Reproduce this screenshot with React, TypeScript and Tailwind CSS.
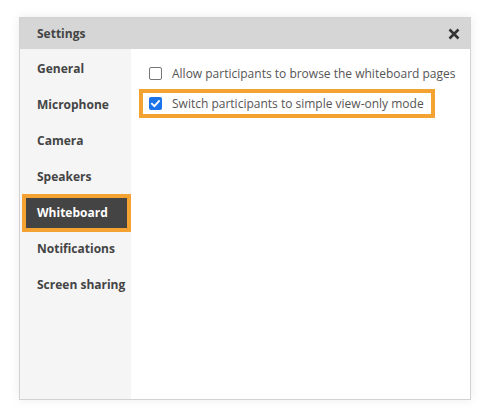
import React from "react";

const items = ["General", "Microphone", "Camera", "Speakers", "Whiteboard", "Notifications", "Screen sharing"];

function Box({ checked }: { checked: boolean }) {
  if (checked) {
    return (
      <span className="flex h-[13px] w-[13px] shrink-0 items-center justify-center rounded-[2px] bg-[#1a73e8]">
        <svg width="11" height="11" viewBox="0 0 11 11">
          <path d="M2 5.8 L4.4 8.2 L9 3" fill="none" stroke="white" strokeWidth="1.9" strokeLinecap="square" />
        </svg>
      </span>
    );
  }
  return <span className="h-[13px] w-[13px] shrink-0 rounded-[2px] border border-[#767676] bg-white" />;
}

export default function App() {
  return (
    <div className="h-[417px] w-[491px] bg-white pl-[19px] pt-[17px]" style={{ fontFamily: "'Open Sans', sans-serif" }}>
      <div className="flex h-[383px] w-[452px] flex-col border border-[#d2d2d2] shadow-[0_0_10px_rgba(0,0,0,0.08)]">
        <div className="flex h-[31px] shrink-0 items-center justify-between bg-[#d6d6d6] pl-[17px] pr-[10px]">
          <span className="text-[12px] font-bold text-[#444]">Settings</span>
          <svg width="12" height="12" viewBox="0 0 12 12">
            <path d="M1.5 1.5 L10.5 10.5 M10.5 1.5 L1.5 10.5" stroke="#333" strokeWidth="2.6" strokeLinecap="butt" />
          </svg>
        </div>
        <div className="flex flex-1">
          <div className="flex w-[111px] shrink-0 flex-col gap-[6px] bg-[#f5f5f5] pl-[6px] pt-[5px]">
            {items.map((it) =>
              it === "Whiteboard" ? (
                <div key={it} className="flex h-[30px] w-[101px] items-center bg-[#444] pl-[11px] text-[12px] font-bold text-white outline-4 outline-[#f4a232]">
                  {it}
                </div>
              ) : (
                <div key={it} className="flex h-[30px] w-[101px] items-center pl-[11px] text-[12px] font-bold text-[#444]">
                  {it}
                </div>
              )
            )}
          </div>
          <div className="flex flex-1 flex-col items-start gap-[9px] bg-white pl-[18px] pt-[14px] text-[12px] text-[#555]">
            <div className="flex h-[21px] items-center gap-[10px]">
              <Box checked={false} />
              <span>Allow participants to browse the whiteboard pages</span>
            </div>
            <div className="-ml-[6px] flex h-[21px] items-center gap-[10px] pl-[6px] pr-[7px] outline-4 outline-[#f4a232]">
              <Box checked={true} />
              <span>Switch participants to simple view-only mode</span>
            </div>
          </div>
        </div>
      </div>
    </div>
  );
}
